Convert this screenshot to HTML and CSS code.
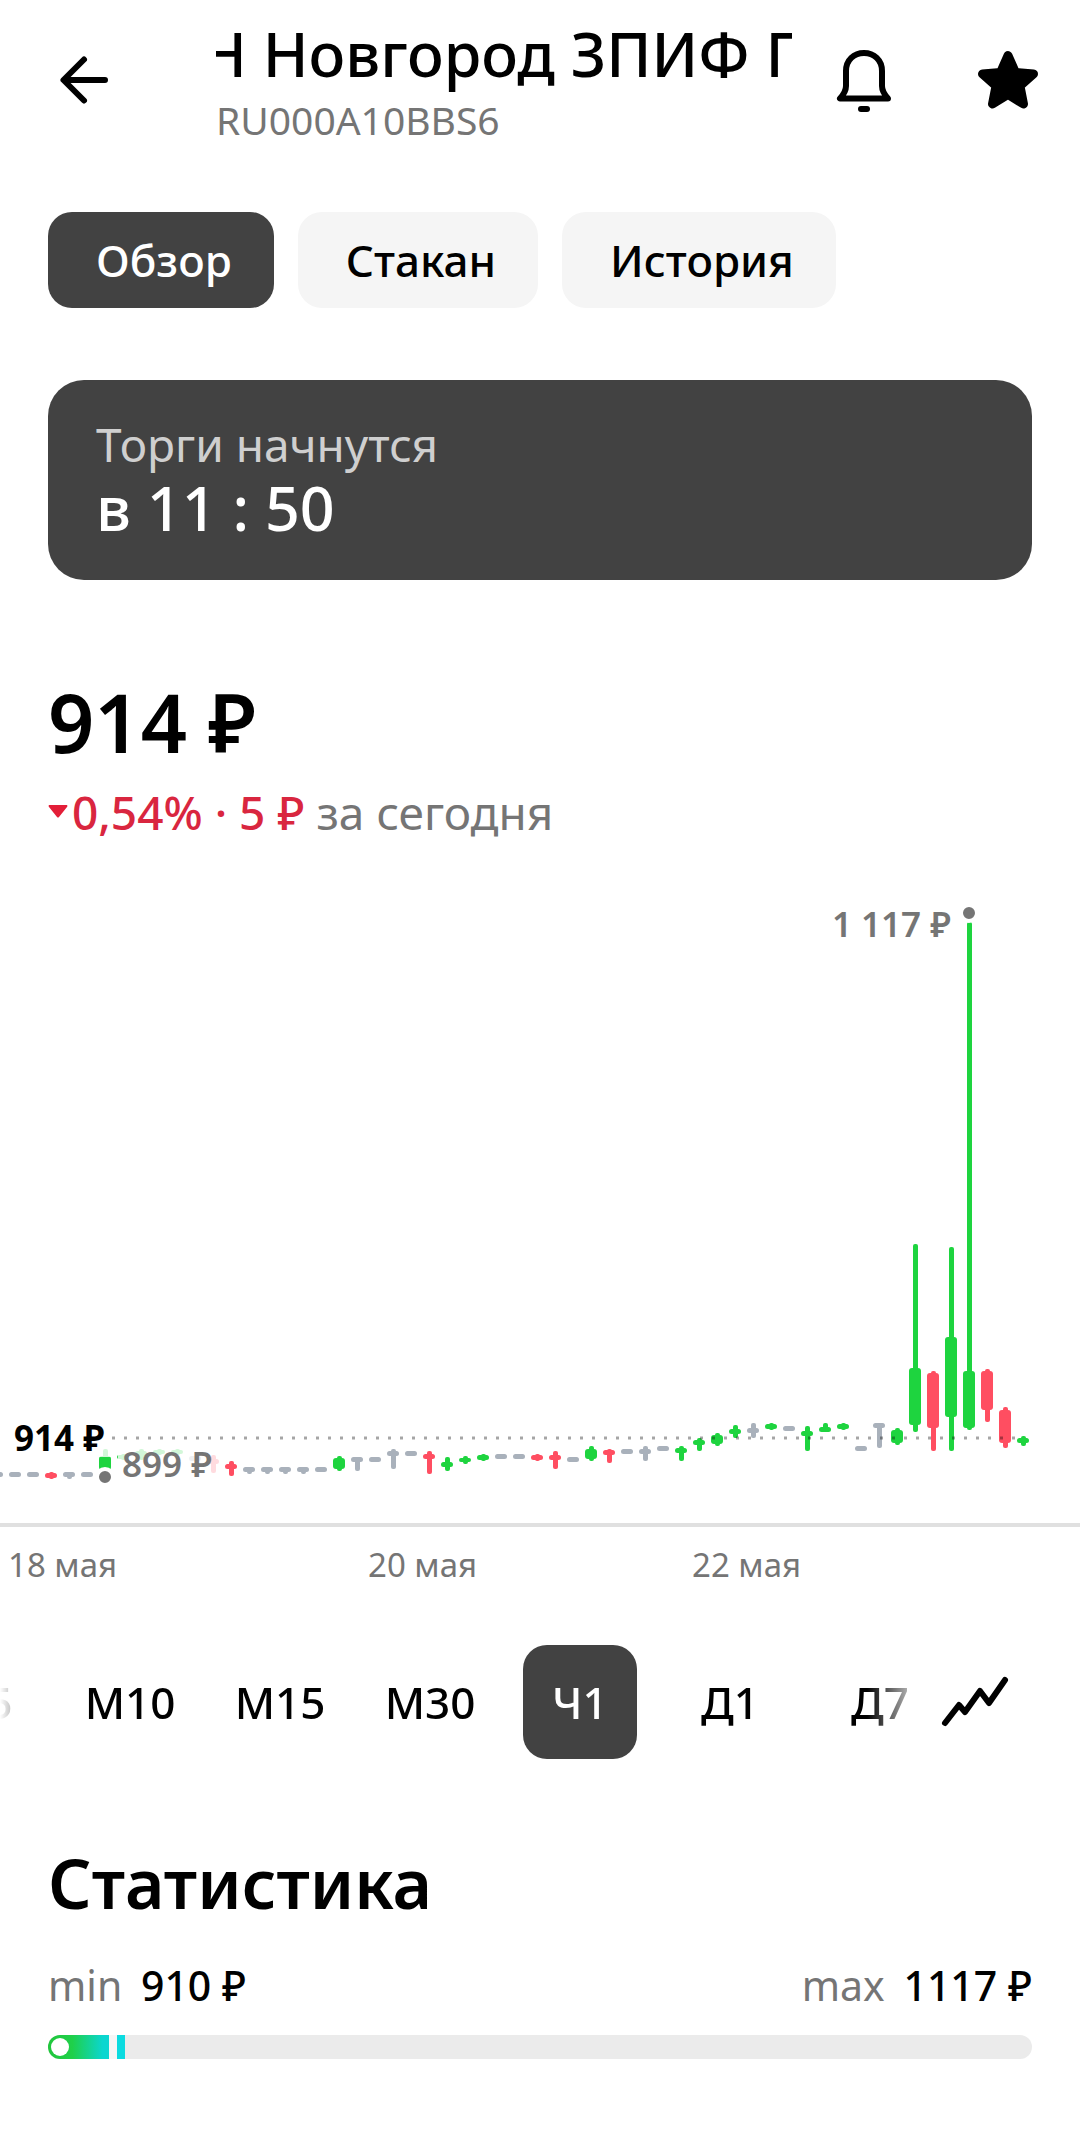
FILE: index.html
```html
<!DOCTYPE html>
<html lang="ru">
<head>
    <meta charset="UTF-8">
    <meta name="viewport" content="width=device-width, initial-scale=1.0">
    <title>Н Новгород ЗПИФ</title>
    <link rel="stylesheet" href="styles.css">
</head>
<body>
    <header class="header">
        <button class="icon-btn back" aria-label="Назад">
            <svg width="72" height="72" viewBox="0 0 72 72" fill="none" stroke="#000" stroke-width="6" stroke-linecap="round" stroke-linejoin="round">
                <path d="M57 36H16M36 15.500L15.500 36L36 56.500"/>
            </svg>
        </button>
        <div class="title-box">
            <h1 class="title">Н Новгород ЗПИФ П</h1>
            <p class="ticker">RU000A10BBS6</p>
        </div>
        <button class="icon-btn" aria-label="Уведомления">
            <svg width="72" height="72" viewBox="0 0 72 72" fill="none" stroke="#000" stroke-width="6" stroke-linecap="round" stroke-linejoin="round">
                <path d="M12 54.500H60C55 49 54 46 54 42V27C54 16 46 9 36 9S18 16 18 27V42C18 46 17 49 12 54.500Z"/>
                <path d="M33 65H39"/>
            </svg>
        </button>
        <button class="icon-btn star" aria-label="В избранном">
            <svg width="72" height="72" viewBox="0 0 72 72" fill="#000" stroke="#000" stroke-width="9" stroke-linejoin="round">
                <path d="M36 11.500L43.500 28.500L61.500 30L48 42L51.500 60L36 50.500L20.500 60L24 42L10.500 30L28.500 28.500Z"/>
            </svg>
        </button>
    </header>

    <nav class="tabs">
        <button class="tab active">Обзор</button>
        <button class="tab">Стакан</button>
        <button class="tab">История</button>
    </nav>

    <div class="trading-card">
        <p class="trading-label">Торги начнутся</p>
        <p class="trading-time">в 11 : 50</p>
    </div>

    <div class="price-block">
        <div class="price">914 ₽</div>
        <p class="change">
            <svg class="arrow-down" width="20" height="14" viewBox="0 0 20 14"><path d="M1 0H19Q20 1 19 2L11 12Q10 13 9 12L1 2Q0 1 1 0Z" fill="#e31e38"/></svg>
            <span class="down">0,54% · 5 ₽</span>
            <span>за сегодня</span>
        </p>
    </div>

    <svg class="chart" viewBox="0 0 1080 717" role="img" aria-label="График цены">
        <g id="candles"></g>
        <rect class="label-bg" x="0" y="540" width="112" height="37"/>
        <rect class="label-bg" x="118" y="566" width="102" height="36"/>
        <line class="last-price" x1="112" y1="558" x2="1018" y2="558"/>
        <circle class="dot" cx="969" cy="33" r="8"/>
        <circle class="dot" cx="105" cy="597" r="8"/>
        <text class="label" x="951" y="57" text-anchor="end">1 117 ₽</text>
        <text class="label current" x="14" y="571">914 ₽</text>
        <text class="label" x="122" y="597">899 ₽</text>
        <rect class="axis" x="0" y="643" width="1080" height="4"/>
        <text class="date" x="8" y="697">18 мая</text>
        <text class="date" x="368" y="697">20 мая</text>
        <text class="date" x="692" y="697">22 мая</text>
    </svg>

    <div class="periods">
        <div class="periods-scroll">
            <div class="periods-list">
                <button class="period">М5</button>
                <button class="period">М10</button>
                <button class="period">М15</button>
                <button class="period">М30</button>
                <button class="period active">Ч1</button>
                <button class="period">Д1</button>
                <button class="period">Д7</button>
            </div>
        </div>
        <button class="icon-btn chart-type" aria-label="Тип графика">
            <svg width="72" height="72" viewBox="0 0 72 72" fill="none" stroke="#000" stroke-width="6" stroke-linecap="round" stroke-linejoin="round">
                <path d="M6 57L20 39L26 46L41 25L50 37L66 14"/>
            </svg>
        </button>
    </div>

    <section class="stats">
        <h2>Статистика</h2>
        <div class="range-labels">
            <p><span class="muted">min</span> 910 ₽</p>
            <p><span class="muted">max</span> 1117 ₽</p>
        </div>
        <div class="range">
            <div class="range-fill"><div class="range-knob"></div></div>
            <div class="range-gap"></div>
            <div class="range-mark"></div>
        </div>
    </section>

    <script>
        const STEP = 18;
        const FIRST_X = -3;
        const colors = { g: "#1ed43f", r: "#ff4e61", n: "#a9b1bb" };

        // type, high, low, body top, body bottom
        const candles = [
            ["n", 592, 597, 592, 597],
            ["n", 592, 597, 592, 597],
            ["n", 592, 597, 592, 597],
            ["r", 592, 599, 593, 598],
            ["n", 592, 599, 592, 597],
            ["n", 592, 597, 592, 597],
            ["g", 569, 591, 576, 590],
            ["g", 574, 580, 575, 579],
            ["g", 569, 580, 571, 576],
            ["g", 569, 575, 570, 574],
            ["g", 569, 575, 570, 574],
            ["n", 576, 581, 576, 581],
            ["r", 575, 593, 579, 584],
            ["r", 581, 596, 584, 589],
            ["n", 587, 594, 587, 592],
            ["n", 587, 594, 587, 592],
            ["n", 587, 594, 587, 592],
            ["n", 587, 594, 587, 592],
            ["n", 587, 592, 587, 592],
            ["g", 576, 591, 578, 589],
            ["n", 577, 591, 577, 582],
            ["n", 577, 582, 577, 582],
            ["n", 569, 589, 571, 576],
            ["n", 571, 576, 571, 576],
            ["r", 571, 594, 574, 579],
            ["g", 577, 591, 582, 587],
            ["g", 576, 584, 578, 582],
            ["g", 574, 581, 575, 580],
            ["n", 574, 579, 574, 579],
            ["n", 574, 579, 574, 579],
            ["r", 574, 581, 575, 580],
            ["r", 571, 589, 575, 580],
            ["n", 577, 582, 577, 582],
            ["g", 566, 581, 569, 579],
            ["r", 569, 583, 570, 575],
            ["n", 569, 574, 569, 574],
            ["n", 566, 581, 569, 574],
            ["n", 566, 571, 566, 571],
            ["g", 566, 581, 568, 573],
            ["g", 558, 571, 560, 565],
            ["g", 553, 566, 555, 564],
            ["g", 545, 558, 549, 554],
            ["n", 543, 558, 548, 553],
            ["g", 543, 550, 544, 549],
            ["n", 546, 551, 546, 551],
            ["g", 546, 571, 551, 556],
            ["g", 543, 552, 547, 552],
            ["g", 543, 550, 544, 549],
            ["n", 566, 571, 566, 571],
            ["n", 543, 568, 543, 548],
            ["g", 548, 565, 550, 563],
            ["g", 364, 552, 488, 545],
            ["r", 491, 571, 493, 548],
            ["g", 367, 571, 457, 537],
            ["g", 42, 550, 491, 548],
            ["r", 489, 542, 491, 530],
            ["r", 527, 568, 530, 563],
            ["g", 556, 566, 558, 563]
        ];

        function bar(x, y, width, height, radius, color) {
            return `<rect x="${x}" y="${y}" width="${width}" height="${height}" rx="${radius}" fill="${color}"/>`;
        }

        function drawCandles() {
            let html = "";
            candles.forEach(([type, high, low, top, bottom], i) => {
                const x = FIRST_X + i * STEP;
                html += bar(x - 2, high, 5, low - high, 2, colors[type]);
                html += bar(x - 6, top, 12, bottom - top, Math.min(3, (bottom - top) / 2), colors[type]);
            });
            document.getElementById("candles").innerHTML = html;
        }

        drawCandles();
    </script>
</body>
</html>
```
FILE: styles.css
```css
body {
    margin: 0;
    background-color: #fff;
    color: #000;
    font-family: 'Noto Sans', 'Open Sans', sans-serif;
}
h1, h2, p {
    margin: 0;
}
button {
    font-family: inherit;
    color: inherit;
    border: none;
    background: none;
    padding: 0;
    cursor: pointer;
}
.icon-btn {
    display: flex;
    flex: none;
}
.header {
    display: flex;
    align-items: center;
    padding: 12px 36px 16px 48px;
}
.back {
    margin-right: 96px;
}
.title-box {
    flex: 1;
    min-width: 0;
    margin-right: 36px;
    padding-top: 4px;
}
.title {
    font-size: 61px;
    font-weight: 500;
    line-height: 76px;
    white-space: nowrap;
    overflow: hidden;
    text-indent: -15px;
}
.ticker {
    font-size: 39px;
    line-height: 56px;
    color: #757575;
}
.star {
    margin-left: 72px;
}
.tabs {
    display: flex;
    gap: 24px;
    padding: 0 48px;
    margin-top: 48px;
}
.tab {
    height: 96px;
    padding: 0 42px 0 48px;
    border-radius: 24px;
    background-color: #f5f5f5;
    font-size: 44px;
    font-weight: 500;
}
.tab.active, .period.active {
    background-color: #424242;
    color: #fff;
}
.trading-card {
    margin: 72px 48px 0;
    padding: 36px 48px;
    border-radius: 36px;
    background-color: #424242;
}
.trading-label {
    font-size: 46px;
    line-height: 56px;
    color: #cfcfcf;
}
.trading-time {
    font-size: 61px;
    font-weight: 500;
    line-height: 72px;
    color: #fff;
}
.price-block {
    padding: 0 48px;
    margin-top: 96px;
}
.price {
    font-size: 81px;
    font-weight: 600;
    line-height: 92px;
}
.change {
    display: flex;
    align-items: center;
    margin-top: 16px;
    font-size: 46px;
    line-height: 56px;
    color: #757575;
}
.arrow-down {
    margin-right: 4px;
}
.down {
    margin-right: 12px;
    font-weight: 500;
    color: #d9263f;
}
.chart {
    display: block;
    width: 100%;
    margin-top: 40px;
}
.label-bg {
    fill: #fff;
    opacity: 0.8;
}
.last-price {
    stroke: rgba(0, 0, 0, 0.35);
    stroke-width: 3;
    stroke-dasharray: 3 9;
}
.dot {
    fill: #757575;
    stroke: #fff;
    stroke-width: 4;
}
.label {
    font-size: 35px;
    font-weight: 600;
    fill: #757575;
}
.label.current {
    font-weight: 700;
    fill: #000;
}
.axis {
    fill: #e0e0e0;
}
.date {
    font-size: 33px;
    fill: #757575;
}
.periods {
    display: flex;
    align-items: center;
    margin-top: 48px;
    padding-right: 69px;
}
.periods-scroll {
    flex: 1;
    min-width: 0;
    overflow: hidden;
    -webkit-mask-image: linear-gradient(to right, transparent, #000 48px, #000 calc(100% - 60px), transparent);
    mask-image: linear-gradient(to right, transparent, #000 48px, #000 calc(100% - 60px), transparent);
}
.periods-list {
    display: flex;
    gap: 36px;
    margin-left: -77px;
}
.period {
    flex: none;
    width: 114px;
    height: 114px;
    border-radius: 24px;
    font-size: 44px;
    font-weight: 500;
}
.chart-type {
    margin-left: 12px;
}
.stats {
    padding: 0 48px;
    margin-top: 84px;
}
.stats h2 {
    font-size: 68px;
    font-weight: 600;
    line-height: 80px;
}
.range-labels {
    display: flex;
    justify-content: space-between;
    margin-top: 36px;
    font-size: 41px;
    font-weight: 500;
    line-height: 52px;
}
.muted {
    margin-right: 8px;
    font-weight: 400;
    color: #757575;
}
.range {
    display: flex;
    height: 24px;
    margin-top: 24px;
    border-radius: 12px;
    background-color: #ebebeb;
    overflow: hidden;
}
.range-fill {
    display: flex;
    align-items: center;
    width: 61px;
    padding-left: 3px;
    box-sizing: border-box;
    background: linear-gradient(to right, #21c63c, #1fd04a 40%, #0bd6d0 90%);
}
.range-knob {
    width: 18px;
    height: 18px;
    border-radius: 50%;
    background-color: #fff;
}
.range-gap {
    width: 8px;
    background-color: #f5f5f5;
}
.range-mark {
    width: 8px;
    background-color: #0bdbe0;
}
```
